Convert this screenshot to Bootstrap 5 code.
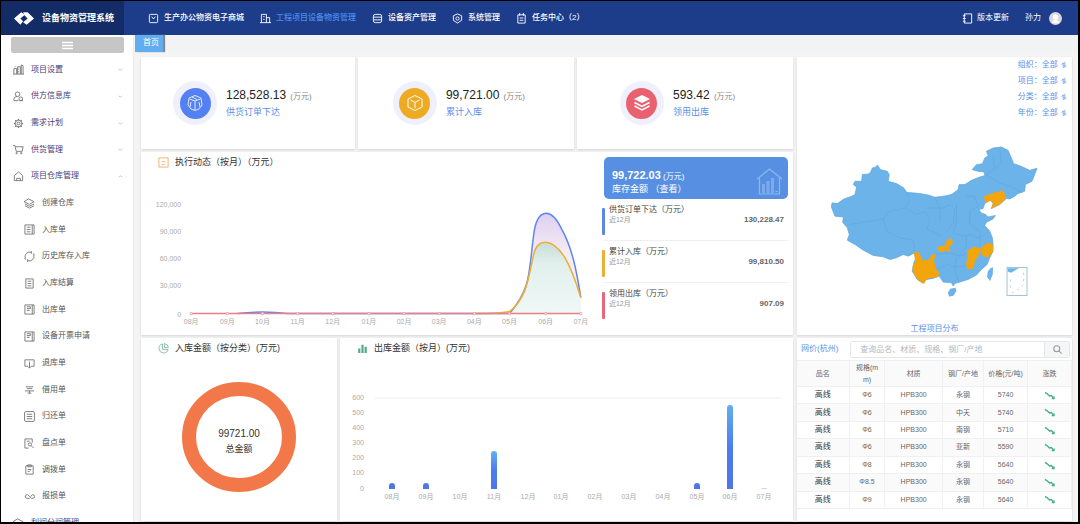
<!DOCTYPE html>
<html lang="zh-CN">
<head>
<meta charset="utf-8">
<meta name="viewport" content="width=device-width, initial-scale=1">
<title>设备物资管理系统</title>
<link href="https://cdn.jsdelivr.net/npm/bootstrap@5.3.0/dist/css/bootstrap.min.css" rel="stylesheet">
<style>
:root{--blue:#1d3d8b;--sky:#6cb3ea;--link:#5b8fe8}
body{font-family:"Liberation Sans","Noto Sans CJK SC",sans-serif;font-size:8px;line-height:12px;color:#444;background:#f4f4f5}
a{text-decoration:none;color:inherit}
svg{flex:none}
.ico{width:11px;height:11px;fill:none;stroke:currentColor;stroke-width:1}
.shell{height:100vh;overflow:hidden;border:solid #000;border-width:1px 2px 2px 1px}
.topbar{height:34px;background:var(--blue);color:#fff;flex:none}
.brand{width:123px;height:100%;background:#142c66;font-size:9px;font-weight:700;gap:8px;padding-left:13px}
.topnav{gap:16px;padding-left:24px}
.topnav a{font-weight:500;gap:5px}
.topnav a.on{color:#4a8df0}
.avatar{width:13px;height:13px}
.side{width:133px;background:#fff;flex:none;border-right:1px solid #ececec}
.toggle{height:16px;margin:2px 9px 3px 10px;background:#c6c6c6;color:#fff;border:0;border-radius:2px;flex:none}
.menu{display:grid;grid-auto-rows:1fr;min-height:480px;flex:none}
.menu a{display:flex;align-items:center;height:100%;padding:1px 10px 0 12px;gap:7px;color:#44407e}
.menu .ico{color:#777}
.menu a.child{padding-left:23px;color:#555}
.menu a .arr{width:5px;height:5px;margin-left:auto;color:#aaa}
.tabs{height:17px;flex:none;background:#f2f3f4}
.tabs a{background:#62adf0;color:#fff;padding-left:8px;margin-left:1px;line-height:16px;width:28px;white-space:nowrap;box-shadow:2px 0 1px #888}
.board{display:grid;grid-template-columns:652fr 275fr;grid-template-rows:92px 1fr 1fr;gap:3px 4px;padding:5px 6px 1px 7px}
.board>*{min-width:0;min-height:0}
.panel{background:#fff;box-shadow:0 1px 2px #d4d4d4}
.map-panel{grid-row:1/3;grid-column:2}
.kpi-ring{width:44px;height:44px;border-radius:50%;background:#f0f0fd;display:grid;place-items:center;flex:none}
.kpi-ring i{width:31px;height:31px;border-radius:50%;display:grid;place-items:center}
.kpi-ring svg{width:18px;height:18px}
.kpi{padding-left:35px;gap:9px}
.kpi:first-child{padding-left:32px}
.num{font-size:12px;line-height:18px;color:#222}
.unit{font-size:8px;color:#888;margin-left:2px}
.kpi-name{color:var(--link);font-size:9px;line-height:16px}
.panel-title{font-size:9px;line-height:20px;height:20px;margin:0;padding-left:17px;gap:6px;color:#333;font-weight:400}
.chart{display:block;width:100%;height:auto;font-size:7px;fill:#aaa}
.trend{flex:0 0 71%;min-width:0}
.stats{flex:1 1 0;min-width:0;padding:5px 5px 0 0}
.stock{background:#5790e2;color:#fff;border-radius:5px;height:42px;padding:6px 5px 0 8px}
.stock b{font-size:11px;line-height:16px}
.stock-name{font-size:9px}
.stat{height:42px;padding-top:6px;border-bottom:1px solid #f0f0f0}
.stats .stat:last-child{border:0}
.stat-bar{width:3px;height:27px;border-radius:1px;margin-top:3px;margin-left:-2px}
.stat-body{line-height:10px}
.stat small{font-size:7px;color:#999}
.filters{padding:0 5px 0 0;color:var(--link)}
.filters label{line-height:16px}
.filters select{appearance:none;border:0;background:none;color:inherit;font-size:8px;padding:0;width:17px}
.china{width:76%;margin:24px 0 0 12%}
.small-tx{font-size:8px;color:#666}
.search{height:17px;border:1px solid #e4e6ea;border-radius:2px;margin:3px 2px 2px 0}
.search input{border:0;font-size:8px;padding:0 9px;color:#555;background:#fff;outline:0;min-width:0}
.search input::placeholder{color:#b8b8b8}
.search button{border:0;border-left:1px solid #e4e6ea;background:#f5f6f8;width:25px;color:#999}
.prices{width:100%;height:149px;table-layout:fixed;border-collapse:collapse;text-align:center;font-size:7px;line-height:12px;color:#666}
.prices th,.prices td{padding:0;border:1px solid #eef0f3;border-left:0}
.prices th{font-weight:400;height:26px;background:#fafafa}
.prices td:first-child{font-size:8px;color:#333}
.prices tbody tr:nth-child(even){background:#fafafa}
</style>
</head>
<body>
<svg class="d-none" aria-hidden="true">
<symbol id="i-city" viewBox="0 0 12 12"><path d="M1 11V5h3v6M5 11V3h3v8M9 11V1l2 1v9M0 11h12M2 3l1-1M6 5v1M6 8v1"/></symbol>
<symbol id="i-user" viewBox="0 0 12 12"><circle cx="5" cy="3.500" r="2.500"/><path d="M6 10.500H1V9c0-2 1.500-3 4-3"/><circle cx="8.500" cy="8.500" r="2"/><path d="M7 10.500h4"/></symbol>
<symbol id="i-gear" viewBox="0 0 12 12"><circle cx="6" cy="6" r="1.500"/><circle cx="6" cy="6" r="3.500"/><path stroke-width="1.600" d="M6 1v1.500M6 9.500V11M1 6h1.500M9.500 6H11M2.500 2.500l1 1M8.500 8.500l1 1M9.500 2.500l-1 1M3.500 8.500l-1 1"/></symbol>
<symbol id="i-cart" viewBox="0 0 12 12"><path d="M0 1.500h2l1.500 6.500h6.500l1-5H2.500"/><circle cx="4" cy="10" r=".8"/><circle cx="9" cy="10" r=".8"/></symbol>
<symbol id="i-home" viewBox="0 0 12 12"><path d="M1.500 10.500V5L6 1l4.500 4v5.500zM4 8v2.500M8 8v2.500M4 8h4"/></symbol>
<symbol id="i-layer" viewBox="0 0 12 12"><path d="M0 4l5-3 6 3-5 3zM1 6.500l5 2.500 5-2.500M1 8.500L6 11l5-2.500"/></symbol>
<symbol id="i-form" viewBox="0 0 12 12"><path d="M1 1h8v10H1zM9 1h2v10H9M3 3.500h4M3 6h4M3 8.500h4"/></symbol>
<symbol id="i-sync" viewBox="0 0 12 12"><path d="M1.500 8A5 5 0 0 1 8 1.500M10.500 4A5 5 0 0 1 4 10.500M8 0v3M10 2.500l1.500 2M4 12V9M2 9.500L.5 7.500"/></symbol>
<symbol id="i-doc" viewBox="0 0 12 12"><path d="M2 1h8v10H2zM4 3.500h4M4 6h4M4 8.500h4"/></symbol>
<symbol id="i-note" viewBox="0 0 12 12"><path d="M1 1h10v10H1zM9 1v10M3 3h4v2H3M3 7h3"/></symbol>
<symbol id="i-down" viewBox="0 0 12 12"><path d="M4.500 9H1V2h10v7H7.500M6 4v7M4.500 9.500L6 11l1.500-1.500"/></symbol>
<symbol id="i-lend" viewBox="0 0 12 12"><path d="M2 3h8M3 5h6M1 7.500h10M6 7.500V10M4 10h4"/></symbol>
<symbol id="i-list" viewBox="0 0 12 12"><rect x=".6" y=".6" width="10.800" height="10.800" rx="1.500"/><path d="M3 3.500h6M3 6h6M3 8.500h6"/></symbol>
<symbol id="i-find" viewBox="0 0 12 12"><path d="M5 11H1V1h8v4M3 3.500h3"/><circle cx="6.500" cy="7" r="1.800"/><path d="M8 8.500l2.500 2.500"/></symbol>
<symbol id="i-clip" viewBox="0 0 12 12"><path d="M2 2h8v9H2zM4 1h4v2H4zM4 6h4M4 8h2l1-1"/></symbol>
<symbol id="i-link" viewBox="0 0 12 12"><path d="M6 8H3a2 2 0 1 1 1-4l2 2 2 2h1.500a1.500 1.500 0 0 0 0-4L7 6"/></symbol>
<symbol id="i-dn" viewBox="0 0 8 8"><path d="M1 3l3 2 3-2"/></symbol>
<symbol id="i-up" viewBox="0 0 8 8"><path d="M1 5l3-2 3 2"/></symbol>
<symbol id="i-sort" viewBox="0 0 8 10"><path d="M3 9V2L1 4.500M5 1v7l2-2.500"/></symbol>
<symbol id="i-fall" viewBox="0 0 12 10"><path d="M1 1.500l3 2 2 2 2-.5 3 3.500M8.500 8.500H11V6"/></symbol>
</svg>

<div class="shell d-flex flex-column">
<header class="topbar d-flex align-items-center">
  <div class="brand d-flex align-items-center text-nowrap">
    <svg width="20" height="15" viewBox="0 0 22 16"><path fill="#fff" d="M0 8l8-7 4 3-5 4 3 3-3 4zM10 1h5l7 7-8 7-4-3 5-4-3-3z"/></svg>
    <span>设备物资管理系统</span>
  </div>
  <nav class="topnav d-flex align-items-center flex-grow-1 text-nowrap">
    <a href="#" class="d-flex align-items-center"><svg class="ico" viewBox="0 0 12 12"><rect x="1.500" y="1.500" width="9" height="9" rx="1"/><path d="M4 4l2 2.500L8 4"/></svg><span>生产办公物资电子商城</span></a>
    <a href="#" class="on d-flex align-items-center"><svg class="ico text-white" viewBox="0 0 12 12"><path d="M1.500 10.500v-9H7v9M7 5h3.500v5.500M0 10.500h12M3.500 4H5M3.500 7H5"/></svg><span>工程项目设备物资管理</span></a>
    <a href="#" class="d-flex align-items-center"><svg class="ico" viewBox="0 0 12 12"><rect x="1.500" y="1.500" width="9" height="9" rx="2"/><path d="M1.500 4.500h9M1.500 7.500h9"/></svg><span>设备资产管理</span></a>
    <a href="#" class="d-flex align-items-center"><svg class="ico" viewBox="0 0 12 12"><path d="M6 1l4.500 2v5L6 11 1.500 8V3z"/><circle cx="6" cy="6" r="1.800"/></svg><span>系统管理</span></a>
    <a href="#" class="d-flex align-items-center"><svg class="ico" viewBox="0 0 12 12"><path d="M2 2h8v9H2zM4 0v3M8 0v3M4 5.500h4M4 8h4"/></svg><span>任务中心（2）</span></a>
  </nav>
  <div class="d-flex align-items-center text-nowrap me-3 gap-3">
    <a href="#" class="d-flex align-items-center"><svg class="ico me-1" viewBox="0 0 12 12"><path d="M2.500 1h8v10h-8zM1 3h3M1 6h3M1 9h3"/></svg><span>版本更新</span></a>
    <a href="#" class="d-flex align-items-center gap-2"><span>孙力</span><svg class="avatar" viewBox="0 0 14 14"><circle cx="7" cy="7" r="7" fill="#d7d7de"/><circle cx="7" cy="5.500" r="3" fill="#fff"/><path d="M3 12c0-5 8-5 8 0z" fill="#fff"/></svg></a>
  </div>
</header>

<div class="d-flex flex-grow-1" style="min-height:0">
<aside class="side d-flex flex-column overflow-hidden">
  <button class="toggle d-flex justify-content-center align-items-center" aria-label="折叠菜单"><svg width="11" height="9" viewBox="0 0 11 9" stroke="currentColor" stroke-width="1.500"><path d="M0 1.500h11M0 4.500h11M0 7.500h11"/></svg></button>
  <ul class="menu list-unstyled mb-0">
    <li><a href="#"><svg class="ico"><use href="#i-city"/></svg>项目设置<svg class="ico arr"><use href="#i-dn"/></svg></a></li>
    <li><a href="#"><svg class="ico"><use href="#i-user"/></svg>供方信息库<svg class="ico arr"><use href="#i-dn"/></svg></a></li>
    <li><a href="#"><svg class="ico"><use href="#i-gear"/></svg>需求计划<svg class="ico arr"><use href="#i-dn"/></svg></a></li>
    <li><a href="#"><svg class="ico"><use href="#i-cart"/></svg>供货管理<svg class="ico arr"><use href="#i-dn"/></svg></a></li>
    <li><a href="#"><svg class="ico"><use href="#i-home"/></svg>项目仓库管理<svg class="ico arr"><use href="#i-up"/></svg></a></li>
    <li><a href="#" class="child"><svg class="ico"><use href="#i-layer"/></svg>创建仓库</a></li>
    <li><a href="#" class="child"><svg class="ico"><use href="#i-form"/></svg>入库单</a></li>
    <li><a href="#" class="child"><svg class="ico"><use href="#i-sync"/></svg>历史库存入库</a></li>
    <li><a href="#" class="child"><svg class="ico"><use href="#i-doc"/></svg>入库结算</a></li>
    <li><a href="#" class="child"><svg class="ico"><use href="#i-note"/></svg>出库单</a></li>
    <li><a href="#" class="child"><svg class="ico"><use href="#i-note"/></svg>设备开票申请</a></li>
    <li><a href="#" class="child"><svg class="ico"><use href="#i-down"/></svg>退库单</a></li>
    <li><a href="#" class="child"><svg class="ico"><use href="#i-lend"/></svg>借用单</a></li>
    <li><a href="#" class="child"><svg class="ico"><use href="#i-list"/></svg>归还单</a></li>
    <li><a href="#" class="child"><svg class="ico"><use href="#i-find"/></svg>盘点单</a></li>
    <li><a href="#" class="child"><svg class="ico"><use href="#i-clip"/></svg>调拨单</a></li>
    <li><a href="#" class="child"><svg class="ico"><use href="#i-link"/></svg>报损单</a></li>
    <li><a href="#"><svg class="ico"><use href="#i-layer"/></svg>利润分润管理<svg class="ico arr"><use href="#i-dn"/></svg></a></li>
  </ul>
</aside>

<div class="d-flex flex-column flex-grow-1" style="min-width:0">
<nav class="tabs d-flex"><a href="#">首页</a></nav>
<main class="board flex-grow-1">
  <div class="d-flex" style="gap:3px">
    <section class="panel kpi d-flex align-items-center flex-fill w-100">
      <span class="kpi-ring"><i style="background:#5380f2"><svg viewBox="0 0 18 18" fill="none" stroke="#dfe8ff"><path d="M9 1.500l6 2.500 1 7-3 4-4 1.500-4-1.500-3-4 1-7zM3.500 5L9 7l5.500-2M9 7v9M6 3l5 2.500M5 8l-1 5M13 8l1 5"/></svg></i></span>
      <div><div class="text-nowrap"><span class="num">128,528.13</span> <span class="unit">(万元)</span></div><div class="kpi-name">供货订单下达</div></div>
    </section>
    <section class="panel kpi d-flex align-items-center flex-fill w-100">
      <span class="kpi-ring"><i style="background:#efaa24"><svg viewBox="0 0 18 18" fill="none" stroke="#fff"><path d="M9 1.500l7 3.500v8l-7 3.500L2 13V5zM4.500 6L9 8.500 13.500 6M9 8.500V14"/></svg></i></span>
      <div><div class="text-nowrap"><span class="num">99,721.00</span> <span class="unit">(万元)</span></div><div class="kpi-name">累计入库</div></div>
    </section>
    <section class="panel kpi d-flex align-items-center flex-fill w-100">
      <span class="kpi-ring ms-2"><i style="background:#e9606f"><svg viewBox="0 0 18 18" fill="none" stroke="#fff" stroke-width="1.500"><path fill="#fff" stroke="none" d="M9 1l8 4-8 4-8-4z"/><path d="M1.500 8.500L9 12.500l7.500-4M1.500 12L9 16l7.500-4"/></svg></i></span>
      <div><div class="text-nowrap"><span class="num">593.42</span> <span class="unit">(万元)</span></div><div class="kpi-name">领用出库</div></div>
    </section>
  </div>

  <section class="panel map-panel d-flex flex-column">
    <div class="filters d-flex flex-column align-items-end">
      <label>组织：<select><option>全部</option></select> <svg width="6" height="8" fill="none" stroke="currentColor"><use href="#i-sort"/></svg></label>
      <label>项目：<select><option>全部</option></select> <svg width="6" height="8" fill="none" stroke="currentColor"><use href="#i-sort"/></svg></label>
      <label>分类：<select><option>全部</option></select> <svg width="6" height="8" fill="none" stroke="currentColor"><use href="#i-sort"/></svg></label>
      <label>年份：<select><option>全部</option></select> <svg width="6" height="8" fill="none" stroke="currentColor"><use href="#i-sort"/></svg></label>
    </div>
    <svg class="china" viewBox="90 46 628 462" role="img" aria-label="工程项目分布地图">
      <path fill="#6cb3ea" stroke="#5ba3da" stroke-width="2" d="M94 232l2-12 16 2 20-14 23-8 10-5 5-23-10-7 5-10h20l2-20 18-2 7-5 5-13 11-3 4-6 10 14 20 5 6 10-3 20 25 7 22 13 8 13 40 4 25 4 20 7 25-3 25-5 20-15 3-15h17l20-13 25-10 15-4-2-11-18-2-18-5 13-15 18-3 7-17 10-7-5-13 20-10 25-3 20 10 10 23 7 17 18 6 30 14 22-6-7 19-8 20-20 10-2 20-20 7-10 8-15 8-10-1-20 18-25 12 5-15-8-10-17 10-5 15-13 3 8 10 13 5 7 7 22-4-7 10-20 10-5 10 15 17 8 20 2 20v20l-10 20-8 20-17 15-15 17-25 13-25 8-15 4-5 8-5-10-25-2-12-18-18 7-20 3-10 12-18-12-15-25 5-25 8-20-10-8-15 8-15-5-20 10-20 5-20-8-30-4-30-16-25-17-23-13 6-17-6-20-14-17 2-16-25-2z"/>
      <path fill="#6cb3ea" d="M452 478l15-3 3 10-10 15-12 1-4-12zM572 416l8-3-1 22-8 20-9-12 2-17z"/>
      <g fill="#f5a50c">
        <path d="M552 200l28-10 30-7 10 22-20 20-25 12 5-16-8-8-14 8z"/>
        <path d="M413 352l22-4 7-18 13-4 5 14-14 14 8 16-14-8-14 6-12-6z"/>
        <path d="M341 370l15-3 12 25 20-1 7-17 13 1-6 20 8 25 10 12-10 12-28 3-9 15-17-8-17-26-1-18 9-14z"/>
        <path d="M502 362l22-10 21 5-9 22-11 18-4 21-16 2-7-15 6-20z"/>
        <path d="M548 350l18-11 14 8-1 21-15 17-16-7-5-12z"/>
      </g>
      <g fill="none" stroke="#579fd6" stroke-width="1.200">
        <path d="M148 285l50-8 52-8 15-22 50-12 15-20-10-27M250 269l10 35 40 22 40 5 5 35M315 235l35 20 25-10 15 25-8 30 22 8 20 12M380 235l50 0 20-10 15 15-5 40-20 30M405 205l15 30 0 40M470 225l0 50-10 35 30 10 25-5 20 10 20-10M500 200l25 0 10 30-25 15 0 40 30 20 0 45M580 80l5 35-25 20 40 25 30 10 40 20M600 60l5 40-20 20M410 375l40-5 30 10 20-8M410 420l35-15 20 8 30-5M470 385l-5 35 10 38M500 320l0 30-20 25"/>
      </g>
      <g transform="translate(0 -10)"><rect x="622" y="424" width="60" height="84" fill="#fff" stroke="#8fb7cf" stroke-width="2.500"/><path fill="#6cb3ea" d="M624 426h34l-12 7-12 7-10-4z"/><path fill="none" stroke="#9bb9c9" stroke-width="2" stroke-dasharray="7 11" d="M632 460v36M672 440v35l-16 16-20 10"/></g>
    </svg>
    <a href="#" class="text-center mt-auto" style="color:var(--link)">工程项目分布</a>
  </section>

  <section class="panel d-flex">
    <div class="trend">
      <h2 class="panel-title d-flex align-items-center"><svg class="ico" viewBox="0 0 12 12" style="color:#f2b066"><path d="M1 1h10v10H1zM4 5h4M4 8h4"/></svg>执行动态（按月）（万元）</h2>
      <svg class="chart" viewBox="0 0 461 160">
        <defs>
          <linearGradient id="gb" x2="0" y2="1"><stop stop-color="#dccff0"/><stop offset=".4" stop-color="#f6ecf6"/><stop offset="1" stop-color="#fdf1f4"/></linearGradient>
          <linearGradient id="gy" x2="0" y2="1"><stop stop-color="#c6ddd8"/><stop offset=".3" stop-color="#e2f0ed"/><stop offset="1" stop-color="#eff8f6"/></linearGradient>
          <linearGradient id="gbar" x2="0" y2="1"><stop stop-color="#62b0f0"/><stop offset=".5" stop-color="#4b7df0"/><stop offset="1" stop-color="#4f74e8"/></linearGradient>
        </defs>
        <g text-anchor="end"><text x="40" y="35">120,000</text><text x="40" y="62">90,000</text><text x="40" y="89">60,000</text><text x="40" y="116">30,000</text><text x="40" y="144">0</text></g>
        <path fill="url(#gb)" d="M367 141C389 115 386 100 391 63C394 36 408 34 419 57C430 77 434 100 438 125V141z"/>
        <path fill="url(#gy)" d="M367 141C384 126 386 105 391 82C395 66 409 65 422 85C429 97 434 112 438 125V141z"/>
        <g fill="none" stroke-width="1.500">
          <path stroke="#5f86ea" d="M96 141Q121 138 146 141H367C389 115 386 100 391 63C394 36 408 34 419 57C430 77 434 100 438 125"/>
          <path stroke="#efad35" d="M330 141Q360 141 367 139C384 126 386 105 391 82C395 66 409 65 422 85C429 97 434 112 438 125"/>
          <path stroke="#e88088" d="M50 141H438"/>
        </g>
        <g fill="#fff" stroke="#e88088" stroke-width=".7"><circle cx="50" cy="141" r="1.200"/><circle cx="86" cy="141" r="1.200"/><circle cx="121" cy="141" r="1.200"/><circle cx="156" cy="141" r="1.200"/><circle cx="191" cy="141" r="1.200"/><circle cx="227" cy="141" r="1.200"/><circle cx="262" cy="141" r="1.200"/><circle cx="297" cy="141" r="1.200"/><circle cx="332" cy="141" r="1.200"/><circle cx="367" cy="141" r="1.200"/><circle cx="403" cy="141" r="1.200"/><circle cx="438" cy="141" r="1.200"/></g>
        <g text-anchor="middle"><text x="50" y="151">08月</text><text x="86" y="151">09月</text><text x="121" y="151">10月</text><text x="156" y="151">11月</text><text x="191" y="151">12月</text><text x="227" y="151">01月</text><text x="262" y="151">02月</text><text x="297" y="151">03月</text><text x="332" y="151">04月</text><text x="367" y="151">05月</text><text x="403" y="151">06月</text><text x="438" y="151">07月</text></g>
      </svg>
    </div>
    <div class="stats">
      <div class="stock d-flex justify-content-between">
        <div class="text-nowrap pt-1"><div><b>99,722.03</b> (万元)</div><div class="stock-name">库存金额 （<a href="#">查看</a>）</div></div>
        <svg class="align-self-end mb-1" width="27" height="27" viewBox="0 0 27 27" fill="none" stroke="#8fb6f0" stroke-width="1.200"><path d="M1 11L13.500 1 26 11M3.500 10v16h20V10"/><path d="M7.500 25v-9M12 25V13M16.500 25V10" stroke-width="3" stroke="#7eaaec"/><path d="M19.500 23.500h2"/></svg>
      </div>
      <div class="stat d-flex gap-1"><span class="stat-bar" style="background:#5f86e4"></span><div class="stat-body flex-grow-1"><div>供货订单下达（万元）</div><div class="d-flex justify-content-between pe-1"><small>近12月</small><b class="small-tx">130,228.47</b></div></div></div>
      <div class="stat d-flex gap-1"><span class="stat-bar" style="background:#efad35"></span><div class="stat-body flex-grow-1"><div>累计入库（万元）</div><div class="d-flex justify-content-between pe-1"><small>近12月</small><b class="small-tx">99,810.50</b></div></div></div>
      <div class="stat d-flex gap-1"><span class="stat-bar" style="background:#e5697a"></span><div class="stat-body flex-grow-1"><div>领用出库（万元）</div><div class="d-flex justify-content-between pe-1"><small>近12月</small><b class="small-tx">907.09</b></div></div></div>
    </div>
  </section>

  <div class="d-flex" style="gap:3px">
    <section class="panel" style="flex:196 1 0;min-width:0">
      <h2 class="panel-title d-flex align-items-center"><svg class="ico" viewBox="0 0 12 12" style="color:#82bba6"><path d="M5 1a5 5 0 1 0 6 6H5zM7 .600V5h4.400A5 5 0 0 0 7 .600z"/></svg>入库金额（按分类）(万元)</h2>
      <svg class="chart" viewBox="0 0 196 160"><ellipse cx="98" cy="79" rx="50" ry="48" fill="none" stroke="#f27849" stroke-width="14"/><g text-anchor="middle" fill="#333"><text x="98" y="79" font-size="10">99721.00</text><text x="98" y="94" font-size="9">总金额</text></g></svg>
    </section>
    <section class="panel" style="flex:453 1 0;min-width:0">
      <h2 class="panel-title d-flex align-items-center"><svg class="ico" viewBox="0 0 12 12" style="color:#54a98c"><path stroke-width="2.400" d="M2.500 11V6M6 11V2M9.500 11V4"/></svg>出库金额（按月）(万元)</h2>
      <svg class="chart" viewBox="0 0 453 160">
        <path stroke="#eee" d="M35 40H441"/>
        <g text-anchor="end"><text x="24" y="42">600</text><text x="24" y="57">500</text><text x="24" y="72">400</text><text x="24" y="87">300</text><text x="24" y="102">200</text><text x="24" y="117">100</text><text x="24" y="133">0</text></g>
        <g fill="#4f78e6"><path d="M49 131v-3a3 3 0 0 1 6 0v3zM83 131v-3a3 3 0 0 1 6 0v3zM354 131v-3a3 3 0 0 1 6 0v3z"/><path fill="url(#gbar)" d="M151 131V96a3 3 0 0 1 6 0v35z"/><path fill="url(#gbar)" d="M387 131V50a3 3 0 0 1 6 0v81z"/><path fill="#c8d5f6" d="M422 130h5v1h-5z"/></g>
        <g text-anchor="middle"><text x="52" y="141">08月</text><text x="86" y="141">09月</text><text x="120" y="141">10月</text><text x="154" y="141">11月</text><text x="188" y="141">12月</text><text x="221" y="141">01月</text><text x="255" y="141">02月</text><text x="289" y="141">03月</text><text x="323" y="141">04月</text><text x="357" y="141">05月</text><text x="390" y="141">06月</text><text x="424" y="141">07月</text></g>
      </svg>
    </section>
  </div>

  <section class="panel">
    <div class="d-flex align-items-center">
      <label for="q" class="text-nowrap ps-1 me-2 pe-1" style="color:var(--link)">网价(杭州)</label>
      <div class="search d-flex flex-grow-1"><input id="q" class="flex-grow-1" placeholder="查询品名、材质、规格、钢厂/产地"><button aria-label="搜索"><svg width="9" height="9" viewBox="0 0 12 12" fill="none" stroke="currentColor" stroke-width="1.400" class="d-block mx-auto"><circle cx="5" cy="5" r="4"/><path d="M8 8l3.500 3.500"/></svg></button></div>
    </div>
    <table class="prices">
      <colgroup><col style="width:19%"><col style="width:13%"><col style="width:21%"><col style="width:15%"><col style="width:16%"><col style="width:16%"></colgroup>
      <thead><tr><th>品名</th><th>规格(m<br>m)</th><th>材质</th><th>钢厂/产地</th><th>价格(元/吨)</th><th>涨跌</th></tr></thead>
      <tbody>
      <tr><td>高线</td><td>Φ6</td><td>HPB300</td><td>永钢</td><td>5740</td><td><svg width="11" height="9" fill="none" stroke="#3fae82" stroke-width="1.500"><use href="#i-fall"/></svg></td></tr>
      <tr><td>高线</td><td>Φ6</td><td>HPB300</td><td>中天</td><td>5740</td><td><svg width="11" height="9" fill="none" stroke="#3fae82" stroke-width="1.500"><use href="#i-fall"/></svg></td></tr>
      <tr><td>高线</td><td>Φ6</td><td>HPB300</td><td>南钢</td><td>5710</td><td><svg width="11" height="9" fill="none" stroke="#3fae82" stroke-width="1.500"><use href="#i-fall"/></svg></td></tr>
      <tr><td>高线</td><td>Φ6</td><td>HPB300</td><td>亚新</td><td>5590</td><td><svg width="11" height="9" fill="none" stroke="#3fae82" stroke-width="1.500"><use href="#i-fall"/></svg></td></tr>
      <tr><td>高线</td><td>Φ8</td><td>HPB300</td><td>永钢</td><td>5640</td><td><svg width="11" height="9" fill="none" stroke="#3fae82" stroke-width="1.500"><use href="#i-fall"/></svg></td></tr>
      <tr><td>高线</td><td>Φ8.5</td><td>HPB300</td><td>永钢</td><td>5640</td><td><svg width="11" height="9" fill="none" stroke="#3fae82" stroke-width="1.500"><use href="#i-fall"/></svg></td></tr>
      <tr><td>高线</td><td>Φ9</td><td>HPB300</td><td>永钢</td><td>5640</td><td><svg width="11" height="9" fill="none" stroke="#3fae82" stroke-width="1.500"><use href="#i-fall"/></svg></td></tr>
      </tbody>
    </table>
  </section>
</main>
</div>
</div>
</div>
<script src="https://cdn.jsdelivr.net/npm/bootstrap@5.3.0/dist/js/bootstrap.bundle.min.js"></script>
</body>
</html>
